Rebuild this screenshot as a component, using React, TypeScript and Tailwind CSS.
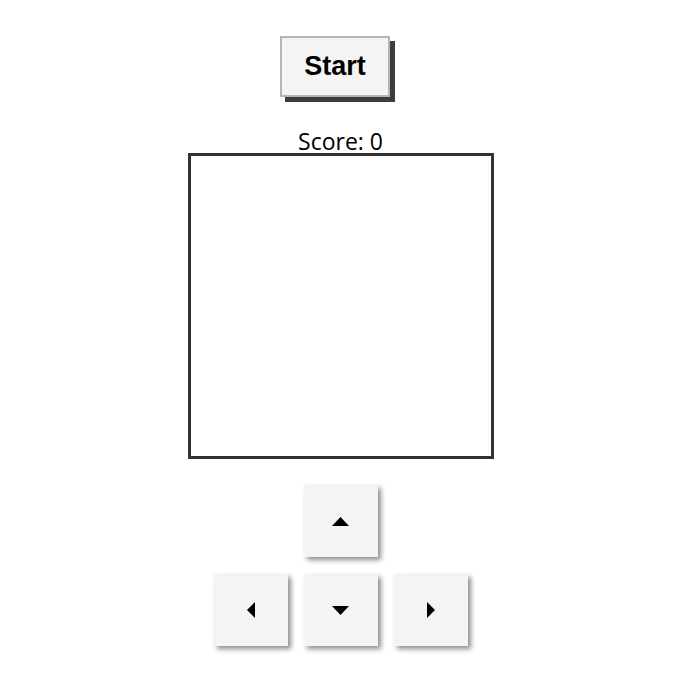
import React from "react";

type Dir = "up" | "down" | "left" | "right";

// ── Small solid triangle used on the arrow pads
function Arrow({ dir }: { dir: Dir }) {
  const points: Record<Dir, string> = {
    up: "0,9 8.5,0 17,9",
    down: "0,0 17,0 8.5,9",
    left: "8,0 8,16 0,8",
    right: "0,0 8,8 0,16",
  };
  const vertical = dir === "up" || dir === "down";
  return (
    <svg
      width={vertical ? 17 : 8}
      height={vertical ? 9 : 16}
      viewBox={vertical ? "0 0 17 9" : "0 0 8 16"}
      fill="#000"
    >
      <polygon points={points[dir]} />
    </svg>
  );
}

function Pad({ dir }: { dir: Dir }) {
  return (
    <button className="w-[74px] h-[72px] flex items-center justify-center bg-[#f4f4f4] shadow-[3px_3px_5px_rgba(0,0,0,0.45)]">
      <Arrow dir={dir} />
    </button>
  );
}

export default function App() {
  return (
    <div className="w-[681px] h-[685px] bg-white flex flex-col items-center pt-[36px]">
      {/* ── Start button */}
      <button className="w-[110px] h-[61px] bg-[#f4f4f4] border-2 border-[#b5b5b5] shadow-[5px_5px_0_#3d3d40] text-[27px] font-bold text-black font-['Liberation_Sans',Arial,sans-serif] mr-[11px]">
        Start
      </button>

      {/* ── Score */}
      <div className="mt-[30px] text-[23px] leading-[28px] text-black font-['Open_Sans','Noto_Sans',sans-serif]">
        Score: 0
      </div>

      {/* ── Board */}
      <div className="w-[306px] h-[306px] border-[3px] border-[#333333] bg-white -mt-[2px]" />

      {/* ── Controls */}
      <div className="mt-[26px] flex flex-col items-center gap-[17px]">
        <Pad dir="up" />
        <div className="flex gap-[16px]">
          <Pad dir="left" />
          <Pad dir="down" />
          <Pad dir="right" />
        </div>
      </div>
    </div>
  );
}
